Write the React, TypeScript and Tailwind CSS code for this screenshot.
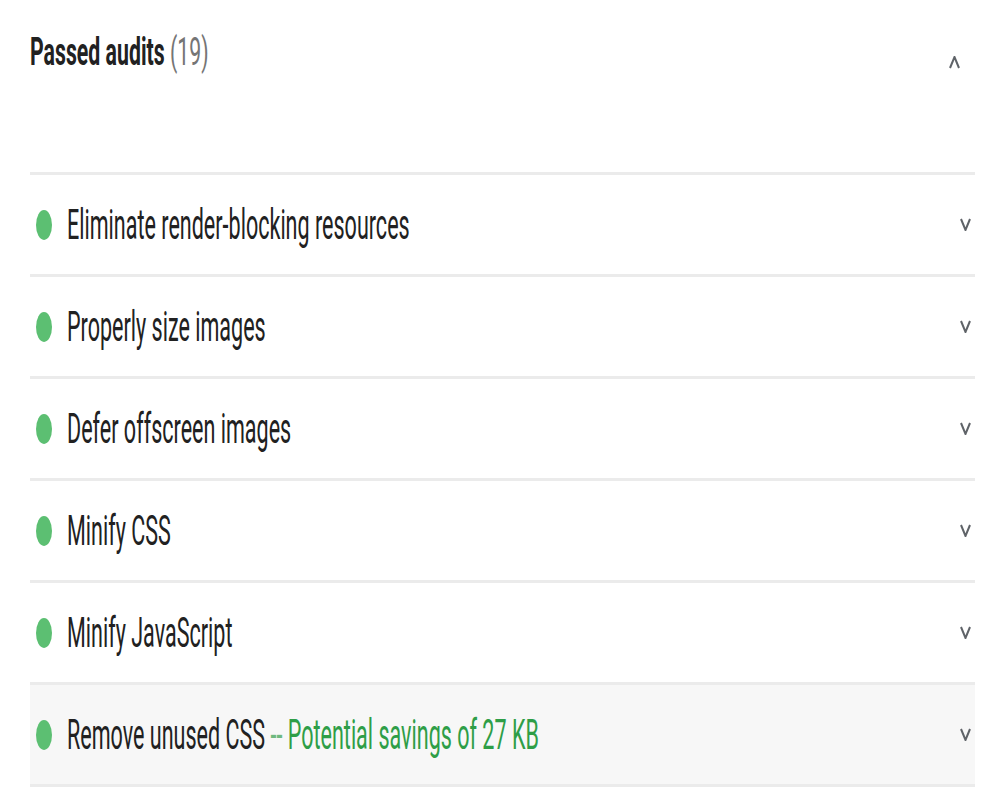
import React from "react";

const audits = [
  { title: "Eliminate render-blocking resources" },
  { title: "Properly size images" },
  { title: "Defer offscreen images" },
  { title: "Minify CSS" },
  { title: "Minify JavaScript" },
  { title: "Remove unused CSS", savings: "Potential savings of 27 KB", active: true },
];

function Chevron({ up = false }: { up?: boolean }) {
  return (
    <svg width="11" height="13" viewBox="0 0 11 13" fill="none" className="text-[#5f6368]">
      <polyline
        points={up ? "1,12 5.5,1 10,12" : "1,1 5.5,12 10,1"}
        stroke="currentColor"
        strokeWidth="2"
      />
    </svg>
  );
}

export default function App() {
  return (
    <div className="min-h-screen w-[1000px] bg-white pl-[30px] pr-[25px] font-['Roboto',sans-serif]">
      {/* Header */}
      <div className="flex h-[172px] items-start justify-between">
        <div className="min-w-0 flex-1 pt-[33px]">
          <span className="inline-block origin-left scale-x-[0.56] whitespace-nowrap text-[38px] leading-none">
            <span className="font-bold text-[#212121]">Passed audits</span>{" "}
            <span className="text-[#757575]">(19)</span>
          </span>
        </div>
        <div className="shrink-0 pt-[56px] pr-[15px]">
          <Chevron up />
        </div>
      </div>

      {/* Audit rows */}
      <div className="border-b-[3px] border-[#ebebeb]">
        {audits.map((a) => (
          <div
            key={a.title}
            className={`flex h-[102px] items-center border-t-[3px] border-[#ebebeb] ${a.active ? "bg-[#f7f7f7]" : ""}`}
          >
            <div className="ml-[6px] h-[30px] w-[16px] shrink-0 rounded-[50%] bg-[#5cbf72]" />
            <div className="ml-[15px] min-w-0 flex-1">
              <span className="inline-block origin-left scale-x-[0.513] whitespace-nowrap text-[42px] leading-none text-[#212121]">
                {a.title}
                {a.savings && (
                  <span className="text-[#2e9e47]">
                    {" "}
                    <span className="text-[#6fb97f]">--</span> {a.savings}
                  </span>
                )}
              </span>
            </div>
            <div className="shrink-0 pr-[4px]">
              <Chevron />
            </div>
          </div>
        ))}
      </div>
    </div>
  );
}
